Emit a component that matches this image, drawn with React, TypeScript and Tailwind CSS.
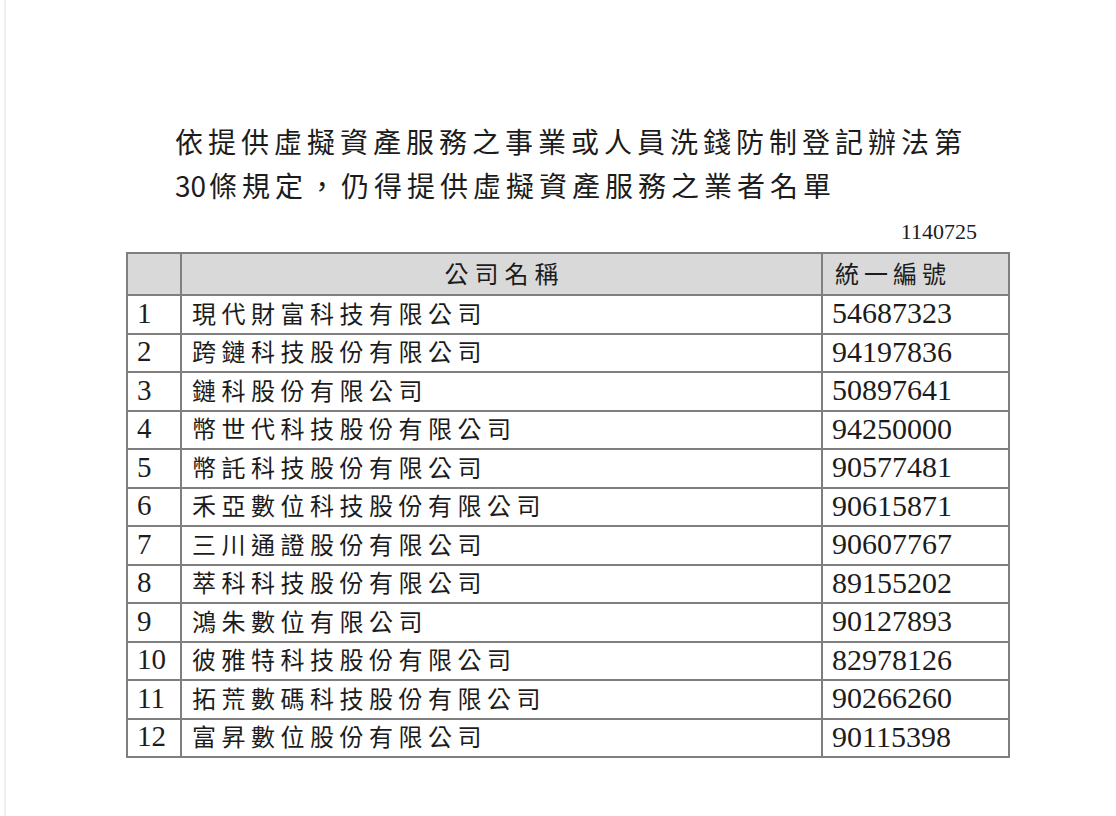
const companies = [
  { no: "1", name: "現代財富科技有限公司", id: "54687323" },
  { no: "2", name: "跨鏈科技股份有限公司", id: "94197836" },
  { no: "3", name: "鏈科股份有限公司", id: "50897641" },
  { no: "4", name: "幣世代科技股份有限公司", id: "94250000" },
  { no: "5", name: "幣託科技股份有限公司", id: "90577481" },
  { no: "6", name: "禾亞數位科技股份有限公司", id: "90615871" },
  { no: "7", name: "三川通證股份有限公司", id: "90607767" },
  { no: "8", name: "萃科科技股份有限公司", id: "89155202" },
  { no: "9", name: "鴻朱數位有限公司", id: "90127893" },
  { no: "10", name: "彼雅特科技股份有限公司", id: "82978126" },
  { no: "11", name: "拓荒數碼科技股份有限公司", id: "90266260" },
  { no: "12", name: "富昇數位股份有限公司", id: "90115398" },
]

const cjk = "font-['Noto_Sans_CJK_TC',sans-serif]"
const serif = "font-['Liberation_Serif',serif]"
const cell = "border-2 border-[#7f7f7f] p-0 align-middle"

export default function App() {
  return (
    <div className="w-[1116px] h-[816px] bg-white text-[#1c1c1c] overflow-hidden">
      <div className="ml-[4px] h-full border-l-2 border-[#efefef] pt-[119px]">
        {/* Title */}
        <div className={`pl-[169px] text-[28px] leading-[44px] tracking-[5px] ${cjk}`}>
          <p>依提供虛擬資產服務之事業或人員洗錢防制登記辦法第</p>
          <p>
            <span className="tracking-[0px] mr-[3px]">30</span>條規定，仍得提供虛擬資產服務之業者名單
          </p>
        </div>

        {/* Date */}
        <div className={`ml-[121px] w-[850px] mt-[13px] text-right text-[22px] leading-[24px] ${serif}`}>
          1140725
        </div>

        {/* Table */}
        <table className="ml-[120px] mt-[8px] w-[884px] border-collapse table-fixed">
          <colgroup>
            <col className="w-[54px]" />
            <col className="w-[641px]" />
            <col />
          </colgroup>
          <thead>
            <tr className="h-[42px] bg-[#d9d9d9]">
              <th className={cell} />
              <th className={`${cell} font-normal text-center`}>
                <div className={`pl-[6px] pb-[3px] text-[24px] tracking-[6px] ${cjk}`}>公司名稱</div>
              </th>
              <th className={`${cell} font-normal text-left`}>
                <div className={`pl-[12px] pb-[3px] text-[24px] tracking-[5px] ${cjk}`}>統一編號</div>
              </th>
            </tr>
          </thead>
          <tbody>
            {companies.map((c) => (
              <tr key={c.no} className="h-[38.5px]">
                <td className={cell}>
                  <div className={`pl-[9px] pb-[3px] text-[29px] leading-[32px] ${serif}`}>{c.no}</div>
                </td>
                <td className={cell}>
                  <div className={`pl-[10px] pb-[3px] text-[24px] leading-[32px] tracking-[5.5px] ${cjk}`}>
                    {c.name}
                  </div>
                </td>
                <td className={cell}>
                  <div className={`pl-[9px] pb-[2px] text-[30px] leading-[32px] ${serif}`}>{c.id}</div>
                </td>
              </tr>
            ))}
          </tbody>
        </table>
      </div>
    </div>
  )
}
